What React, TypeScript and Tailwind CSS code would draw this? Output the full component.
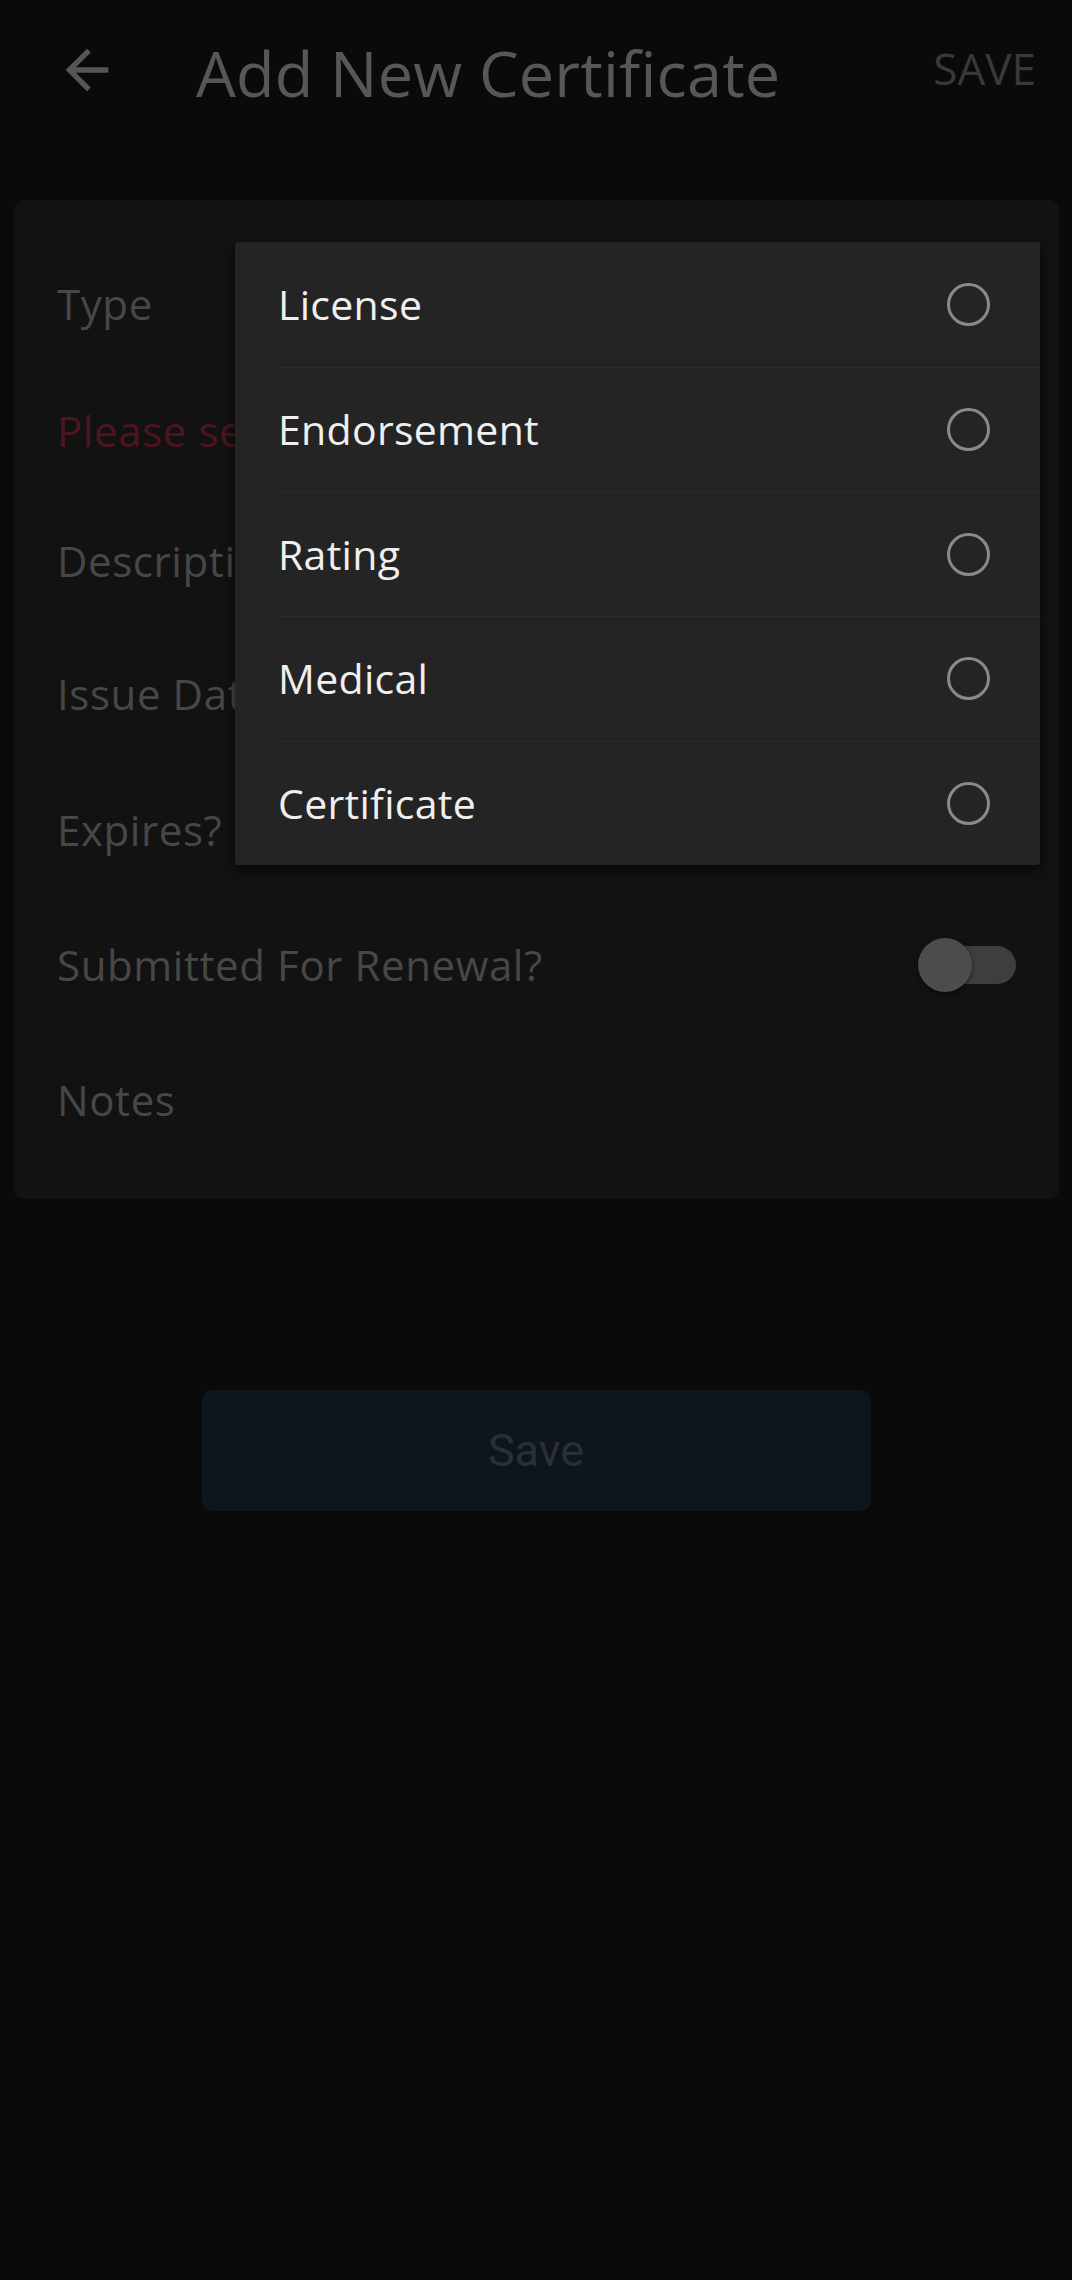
import React from "react";

const items = ["License", "Endorsement", "Rating", "Medical", "Certificate"];

function Radio() {
  return (
    <div className="w-[43px] h-[43px] rounded-full border-[3.5px] border-[#8a8a8a] shrink-0" />
  );
}

export default function App() {
  return (
    <div
      className="relative w-full min-h-[2280px] bg-[#0a0a0a]"
      style={{ fontFamily: '"Open Sans", "Noto Sans", sans-serif' }}
    >
      {/* Header */}
      <div className="h-[140px] flex items-center">
        <svg
          viewBox="0 0 24 24"
          className="w-[64px] h-[64px] ml-[55px] shrink-0"
          fill="#565656"
        >
          <path d="M20 11H7.83l5.59-5.59L12 4l-8 8 8 8 1.41-1.41L7.83 13H20v-2z" />
        </svg>
        <div className="ml-[77px] text-[63px] leading-none text-[#575757] pt-[4px] tracking-[0.2px]">
          Add New Certificate
        </div>
        <div className="ml-auto mr-[36px] text-[44px] leading-none text-[#393939] pb-[5px]">
          SAVE
        </div>
      </div>

      {/* Card */}
      <div className="mt-[60px] ml-[14px] mr-[13px] rounded-[10px] bg-[#121212] pt-[37px] pb-[32px] text-[42px] leading-none text-[#474747] tracking-[0.6px]">
        <div className="h-[134px] flex items-center pl-[43px]">Type</div>
        <div className="h-[120px] flex items-center pl-[43px] text-[#4e1520]">
          <span className="whitespace-nowrap">Please sel</span>
        </div>
        <div className="h-[133px] flex items-center pl-[43px] pt-[7px] border-b border-[#171717]">
          <span className="whitespace-nowrap">Descripti</span>
        </div>
        <div className="h-[139px] flex items-center pl-[43px]">
          <span className="whitespace-nowrap">Issue Dat</span>
        </div>
        <div className="h-[135px] flex items-center pl-[43px] border-b border-[#171717]">
          Expires?
        </div>
        <div className="h-[135px] flex items-center justify-between pl-[43px] pr-[43px] border-b border-[#171717]">
          <span>Submitted For Renewal?</span>
          <div className="relative w-[98px] h-[54px]">
            <div className="absolute right-0 top-[8px] w-[93px] h-[38px] rounded-full bg-[#3e3e3e]" />
            <div className="absolute left-0 top-0 w-[54px] h-[54px] rounded-full bg-[#4c4c4c] shadow-[0_2px_4px_rgba(0,0,0,0.5)]" />
          </div>
        </div>
        <div className="h-[134px] flex items-center pl-[43px]">Notes</div>
      </div>

      {/* Save button */}
      <div className="mt-[191px] mx-auto w-[669px] h-[121px] rounded-[10px] bg-[#0e151d] flex items-center justify-center">
        <span
          className="text-[45px] leading-none text-[#2a2f37]"
          style={{ fontFamily: 'Roboto, "Noto Sans", sans-serif' }}
        >
          Save
        </span>
      </div>

      {/* Dropdown menu overlay */}
      <div className="absolute left-[235px] top-[242px] w-[805px] bg-[#242424] rounded-[3px] shadow-[0_6px_14px_rgba(0,0,0,0.6)] text-[41px] font-medium leading-none text-[#efefef] tracking-[0.3px]">
        {items.map((it, i) => (
          <div
            key={it}
            className={
              i === 0
                ? "ml-[43px] pr-[50px] h-[125px] flex items-center justify-between"
                : "ml-[43px] pr-[50px] h-[124.5px] flex items-center justify-between border-t border-[#2b2b2b]"
            }
          >
            <span>{it}</span>
            <Radio />
          </div>
        ))}
      </div>
    </div>
  );
}
